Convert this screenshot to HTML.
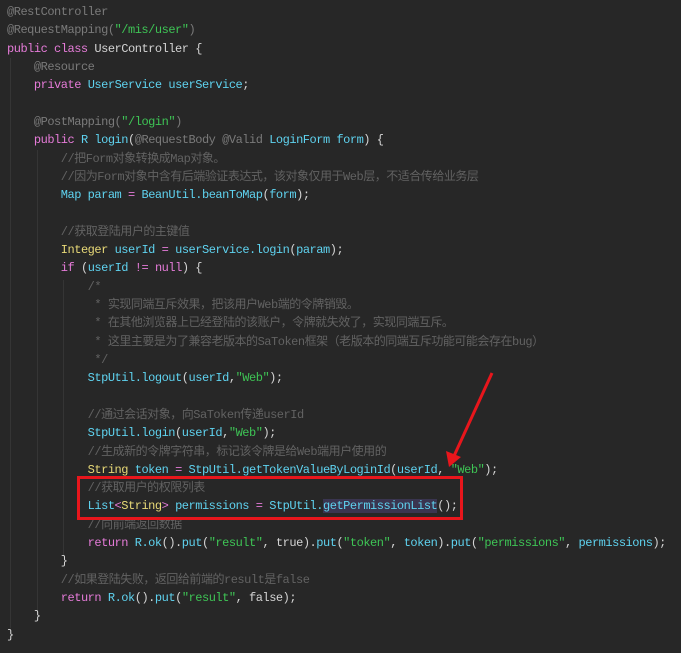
<!DOCTYPE html>
<html><head><meta charset="utf-8"><style>
html,body{margin:0;padding:0;width:681px;height:653px;background:#272727;overflow:hidden}
pre{position:absolute;left:7px;top:3px;margin:0;font-family:"Liberation Mono","Noto Sans CJK SC",monospace;font-size:12px;letter-spacing:-0.48px;line-height:18.32px;color:#d4d4d4;white-space:pre}
.a{color:#7a7a7a}.k{color:#e57bd8}.i{color:#5fd3f0}.s{color:#3ec455}.c{color:#626262}.y{color:#e8d977}.w{color:#d4d4d4}
.hl{background:#3a3550}
.g{position:absolute;width:1px;background:#353535}
</style></head><body>
<div class="g" style="left:10px;top:58px;height:570px"></div>
<div class="g" style="left:37px;top:150px;height:460px"></div>
<div class="g" style="left:63px;top:280px;height:275px"></div>
<pre><span class="a">@RestController</span>
<span class="a">@RequestMapping(</span><span class="s">"/mis/user"</span><span class="a">)</span>
<span class="k">public class</span> <span class="w">UserController {</span>
    <span class="a">@Resource</span>
    <span class="k">private</span> <span class="i">UserService userService</span>;

    <span class="a">@PostMapping(</span><span class="s">"/login"</span><span class="a">)</span>
    <span class="k">public</span> <span class="i">R login</span>(<span class="a">@RequestBody @Valid</span> <span class="i">LoginForm form</span>) {
        <span class="c">//把Form对象转换成Map对象。</span>
        <span class="c">//因为Form对象中含有后端验证表达式，该对象仅用于Web层，不适合传给业务层</span>
        <span class="i">Map param</span> <span class="k">=</span> <span class="i">BeanUtil.beanToMap</span>(<span class="i">form</span>);

        <span class="c">//获取登陆用户的主键值</span>
        <span class="y">Integer</span> <span class="i">userId</span> <span class="k">=</span> <span class="i">userService.login</span>(<span class="i">param</span>);
        <span class="k">if</span> (<span class="i">userId</span> <span class="k">!=</span> <span class="k">null</span>) {
            <span class="c">/*</span>
<span class="c">             * 实现同端互斥效果，把该用户Web端的令牌销毁。</span>
<span class="c">             * 在其他浏览器上已经登陆的该账户，令牌就失效了，实现同端互斥。</span>
<span class="c">             * 这里主要是为了兼容老版本的SaToken框架（老版本的同端互斥功能可能会存在bug）</span>
<span class="c">             */</span>
            <span class="i">StpUtil.logout</span>(<span class="i">userId</span>,<span class="s">"Web"</span>);

            <span class="c">//通过会话对象，向SaToken传递userId</span>
            <span class="i">StpUtil.login</span>(<span class="i">userId</span>,<span class="s">"Web"</span>);
            <span class="c">//生成新的令牌字符串，标记该令牌是给Web端用户使用的</span>
            <span class="y">String</span> <span class="i">token</span> <span class="k">=</span> <span class="i">StpUtil.getTokenValueByLoginId</span>(<span class="i">userId</span>, <span class="s">"Web"</span>);
            <span class="c">//获取用户的权限列表</span>
            <span class="i">List</span><span class="k">&lt;</span><span class="y">String</span><span class="k">&gt;</span> <span class="i">permissions</span> <span class="k">=</span> <span class="i">StpUtil.<span class="hl">getPermissionList</span></span>();
            <span class="c">//向前端返回数据</span>
            <span class="k">return</span> <span class="i">R.ok</span>().<span class="i">put</span>(<span class="s">"result"</span>, <span class="w">true</span>).<span class="i">put</span>(<span class="s">"token"</span>, <span class="i">token</span>).<span class="i">put</span>(<span class="s">"permissions"</span>, <span class="i">permissions</span>);
        }
        <span class="c">//如果登陆失败，返回给前端的result是false</span>
        <span class="k">return</span> <span class="i">R.ok</span>().<span class="i">put</span>(<span class="s">"result"</span>, <span class="w">false</span>);
    }
}</pre>
<svg width="681" height="653" style="position:absolute;left:0;top:0">
<rect x="78.5" y="477.5" width="383" height="41" fill="none" stroke="#e8161c" stroke-width="3"/>
<line x1="492" y1="373" x2="454" y2="456" stroke="#e8161c" stroke-width="3"/>
<polygon points="449,467 446,451 461,457" fill="#e8161c"/>
</svg>
</body></html>
